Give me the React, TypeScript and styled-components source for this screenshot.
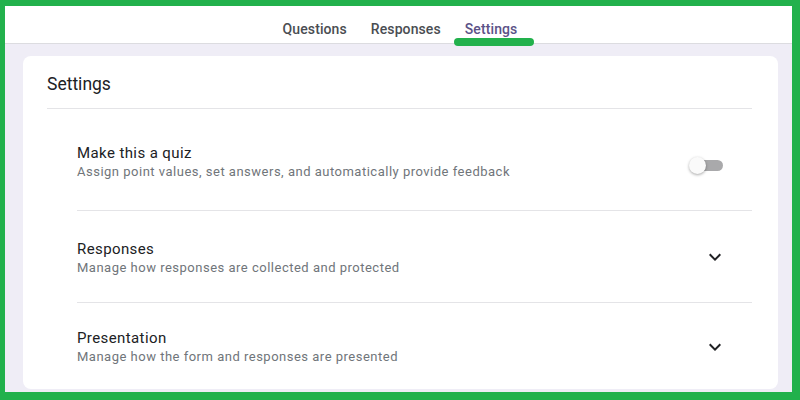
import React from "react";
import styled, { createGlobalStyle } from "styled-components";

const Global = createGlobalStyle`
  * { box-sizing: border-box; }
  html, body { margin: 0; padding: 0; }
  body { font-family: Roboto, "Noto Sans", Arial, sans-serif; background: #fff; }
`;

const Frame = styled.div`
  width: 800px;
  height: 400px;
  border-style: solid;
  border-color: #22b14c;
  border-width: 6px 8px 8px 5px;
  background: #efedf6;
  display: flex;
  flex-direction: column;
  overflow: hidden;
`;

const Header = styled.header`
  height: 38px;
  flex: none;
  background: #fff;
  border-bottom: 1px solid #dcdce0;
  display: flex;
  justify-content: center;
  align-items: center;
  padding-top: 8px;
  padding-left: 3px;
  gap: 24px;
`;

const Tab = styled.div<{ $active?: boolean }>`
  position: relative;
  font-size: 14px;
  font-weight: 500;
  letter-spacing: 0.1px;
  line-height: 18px;
  color: ${(p) => (p.$active ? "#5b5287" : "#4a4d52")};
`;

const Marker = styled.span`
  position: absolute;
  left: -11px;
  right: -17px;
  top: 18px;
  height: 8px;
  border-radius: 4px;
  background: #22b14c;
`;

const Body = styled.main`
  flex: 1;
  padding: 12px 14px 3px 18px;
  display: flex;
`;

const Card = styled.section`
  flex: 1;
  background: #fff;
  border-radius: 8px;
  padding: 0 26px 0 24px;
  display: flex;
  flex-direction: column;
`;

const Title = styled.h1`
  margin: 0;
  padding: 16px 0 12px;
  font-size: 17.5px;
  line-height: 24px;
  font-weight: 400;
  color: #202124;
  border-bottom: 1px solid #e4e4e7;
`;

const List = styled.div`
  padding-left: 30px;
  display: flex;
  flex-direction: column;
`;

const Row = styled.div<{ $h: number; $last?: boolean; $shift?: number }>`
  height: ${(p) => p.$h}px;
  display: flex;
  align-items: center;
  justify-content: space-between;
  padding-top: ${(p) => p.$shift ?? 0}px;
  border-bottom: ${(p) => (p.$last ? "none" : "1px solid #e4e4e7")};
`;

const Texts = styled.div`
  display: flex;
  flex-direction: column;
`;

const RowTitle = styled.div`
  font-size: 15px;
  line-height: 19px;
  letter-spacing: 0.4px;
  color: #202124;
`;

const RowSub = styled.div`
  font-size: 13px;
  line-height: 18px;
  letter-spacing: 0.5px;
  color: #70757a;
`;

const SwitchBox = styled.div`
  position: relative;
  width: 36px;
  height: 18px;
  margin-right: 29px;
  margin-top: 6px;
`;

const Track = styled.span`
  position: absolute;
  left: 6px;
  right: 0;
  top: 3px;
  height: 11px;
  border-radius: 6px;
  background: #a9a9ab;
`;

const Thumb = styled.span`
  position: absolute;
  left: 2px;
  top: 0;
  width: 17px;
  height: 17px;
  border-radius: 50%;
  background: #fafafa;
  box-shadow: 0 1px 3px rgba(0, 0, 0, 0.35);
`;

const Chevron = styled.svg`
  width: 24px;
  height: 24px;
  margin-right: 25px;
  margin-top: -2px;
  fill: #202124;
`;

const Expand = () => (
  <Chevron viewBox="0 0 24 24">
    <path d="M16.59 8.59L12 13.17 7.41 8.59 6 10l6 6 6-6z" />
  </Chevron>
);

export default function App() {
  return (
    <>
      <Global />
      <Frame>
        <Header>
          <Tab>Questions</Tab>
          <Tab>Responses</Tab>
          <Tab $active>
            Settings
            <Marker />
          </Tab>
        </Header>
        <Body>
          <Card>
            <Title>Settings</Title>
            <List>
              <Row $h={102} $shift={6}>
                <Texts>
                  <RowTitle>Make this a quiz</RowTitle>
                  <RowSub>Assign point values, set answers, and automatically provide feedback</RowSub>
                </Texts>
                <SwitchBox>
                  <Track />
                  <Thumb />
                </SwitchBox>
              </Row>
              <Row $h={92} $shift={3}>
                <Texts>
                  <RowTitle>Responses</RowTitle>
                  <RowSub>Manage how responses are collected and protected</RowSub>
                </Texts>
                <Expand />
              </Row>
              <Row $h={86} $shift={3} $last>
                <Texts>
                  <RowTitle>Presentation</RowTitle>
                  <RowSub>Manage how the form and responses are presented</RowSub>
                </Texts>
                <Expand />
              </Row>
            </List>
          </Card>
        </Body>
      </Frame>
    </>
  );
}
